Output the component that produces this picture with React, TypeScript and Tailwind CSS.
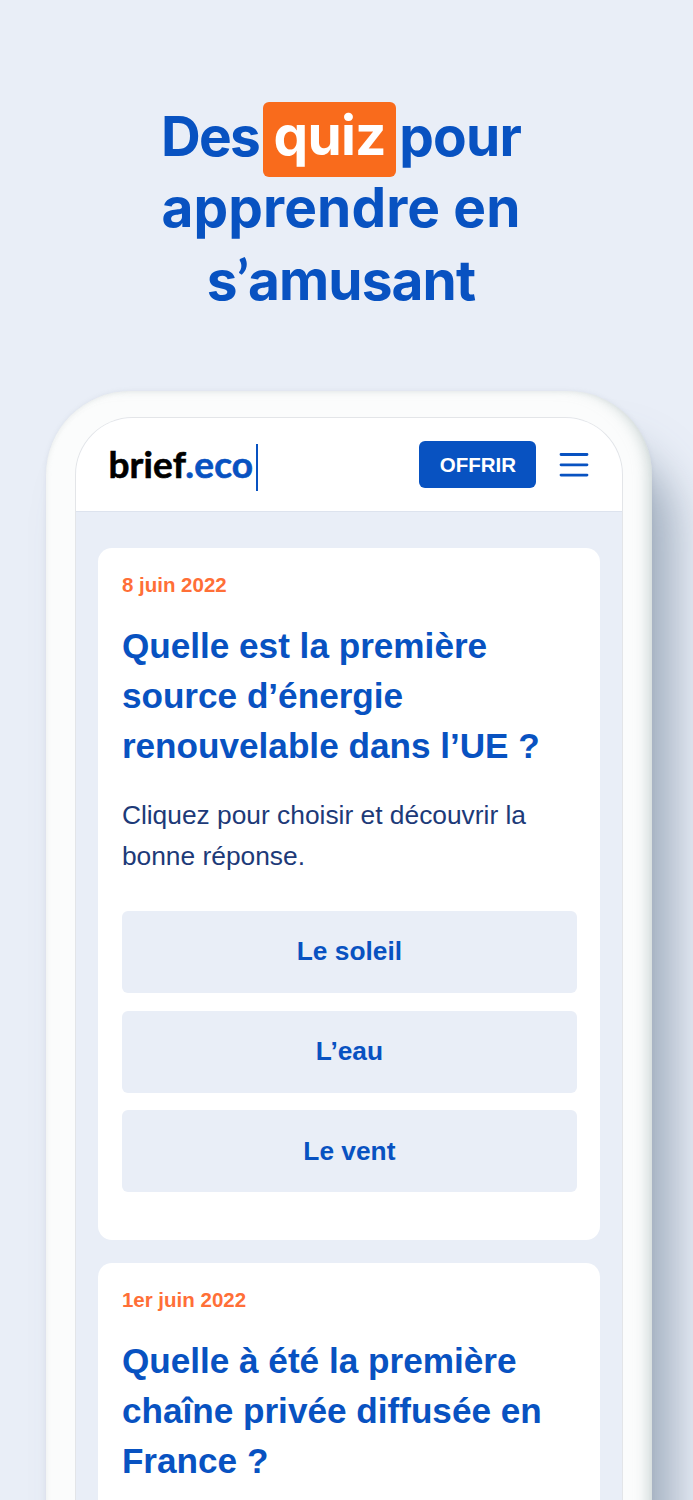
import React from 'react';

interface QuizCardProps {
  date: string;
  title: string[];
  description?: string;
  options?: string[];
}

const QuizCard: React.FC<QuizCardProps> = ({ date, title, description, options = [] }) => {
  return (
    <article className="h-[691.5px] shrink-0 rounded-[14px] bg-white px-[23.5px] pt-[25px]">
      <p className="text-[20.5px] leading-[24px] font-bold text-[#ff6f37]">{date}</p>
      <h2 className="mt-[24px] text-[35.15px] leading-[49.8px] font-bold whitespace-nowrap text-[#0852c1]">
        {title.map((line) => (
          <span key={line} className="block">
            {line}
          </span>
        ))}
      </h2>
      {description && (
        <p className="mt-[24.3px] text-[26.35px] leading-[41px] text-[#1d3a78]">{description}</p>
      )}
      {options.length > 0 && (
        <div className="mt-[34.5px] flex flex-col gap-[17.6px]">
          {options.map((option) => (
            <button
              key={option}
              type="button"
              className="h-[82px] w-full rounded-md bg-[#e9eef7] text-[26.3px] font-bold text-[#0852c1]"
            >
              {option}
            </button>
          ))}
        </div>
      )}
    </article>
  );
};

const Header = () => {
  return (
    <header className="flex h-[94px] shrink-0 items-center border-b border-[#dde3ee] bg-white pr-[33px] pl-[32px]">
      <div className="mt-[5px] flex h-[47px] w-[150px] items-center border-r-[2px] border-[#0852c1] font-['Lato',sans-serif] text-[37px] leading-none font-bold whitespace-nowrap">
        <span className="-mt-[7px] tracking-[0.15px] text-black [-webkit-text-stroke:0.6px_currentColor]">
          brief<span className="text-[#0852c1]">.eco</span>
        </span>
      </div>
      <button
        type="button"
        className="ml-auto h-[47px] w-[117px] rounded-md bg-[#0852c1] pt-px text-[20.5px] font-bold text-white"
      >
        OFFRIR
      </button>
      <svg className="ml-[23px] h-[26px] w-[30px]" viewBox="0 0 30 26" stroke="#0852c1" strokeWidth="2.8" strokeLinecap="round">
        <path d="M2 2.5H28M2 12.8H28M2 23.1H28" />
      </svg>
    </header>
  );
};

export default function App() {
  return (
    <main className="flex h-[1500px] w-[693px] flex-col overflow-hidden bg-[#e9eef7] font-['Liberation_Sans',Arial,sans-serif]">
      <h1 className="flex h-[391px] shrink-0 flex-col items-center pt-[101px] pr-[11px] font-['Inter',sans-serif] text-[55px] leading-[71px] font-bold whitespace-nowrap text-[#0852c1]">
        <span className="flex h-[71px] items-start">
          <span className="tracking-[-1.7px]">Des</span>
          <span className="mt-px mr-[3px] ml-1 flex h-[75px] w-[133px] justify-center rounded-md bg-[#f96b1c] leading-[66px] tracking-[-0.8px] text-white">
            quiz
          </span>
          <span className="tracking-[-0.8px]">pour</span>
        </span>
        <span className="h-[72px] tracking-[0.1px]">apprendre en</span>
        <span className="h-[71px] tracking-[-0.9px]">
          s<span className="font-['Lato',sans-serif]">’</span>amusant
        </span>
      </h1>

      <div className="ml-[46.4px] flex h-[1240px] w-[606px] shrink-0 flex-col rounded-t-[84px] bg-[#fbfcfc] px-[29px] pt-[26px] shadow-[28px_52px_44px_-6px_rgba(90,112,135,0.5),0_0_5px_rgba(120,135,150,0.12),inset_-10px_0_14px_-6px_rgba(170,185,185,0.55),inset_1px_1px_4px_rgba(190,200,200,0.22)]">
        <div className="flex h-full flex-col overflow-hidden rounded-t-[58px] border border-b-0 border-[#e3e5e8] bg-[#e9eef7]">
          <Header />
          <div className="flex flex-col gap-[23.5px] px-[22px] pt-[36px]">
            <QuizCard
              date="8 juin 2022"
              title={['Quelle est la première', 'source d’énergie', 'renouvelable dans l’UE ?']}
              description="Cliquez pour choisir et découvrir la bonne réponse."
              options={['Le soleil', 'L’eau', 'Le vent']}
            />
            <QuizCard
              date="1er juin 2022"
              title={['Quelle à été la première', 'chaîne privée diffusée en', 'France ?']}
            />
          </div>
        </div>
      </div>
    </main>
  );
}
